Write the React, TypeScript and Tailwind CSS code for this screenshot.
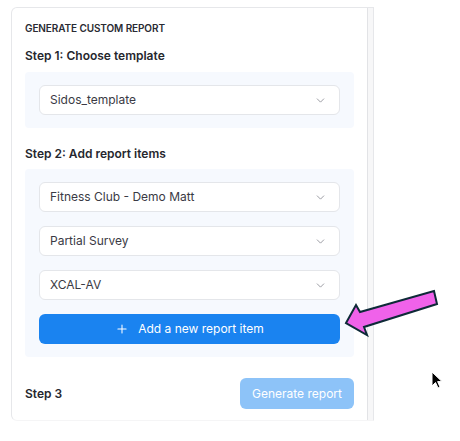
import React from 'react'
import { ChevronDown, Plus } from 'lucide-react'

const Select = ({ value }: { value: string }) => (
  <div className="h-[30px] flex items-center justify-between bg-white border border-[#e4e6ea] rounded-md pl-[10px] pr-[12px] text-[12px] text-[#3a3a44]">
    <span>{value}</span>
    <ChevronDown size={13} strokeWidth={1.6} className="text-[#8d8f97]" />
  </div>
)

const App = () => {
  return (
    <div className="relative w-[460px] h-[441px] bg-white font-['Inter',sans-serif] overflow-hidden">
      <div className="ml-[11px] mt-[7px] w-[363px] h-[414px] flex border border-[#e6e7ea] border-b-[#f5f5f6] rounded-tl-md rounded-bl-md">
        <div className="flex-1 pl-[13px] pr-[13px] pt-[14px]">
          <h2 className="text-[10px] font-semibold uppercase tracking-[-0.01em] text-[#2a2b33] leading-[12px]">Generate Custom Report</h2>

          <h3 className="mt-[14px] text-[12px] font-semibold text-[#26272e] leading-[16px]">Step 1: Choose template</h3>
          <div className="mt-[8px] bg-[#f6f9fe] rounded px-[14px] py-[13px]">
            <Select value="Sidos_template" />
          </div>

          <h3 className="mt-[18px] text-[12px] font-semibold text-[#26272e] leading-[16px]">Step 2: Add report items</h3>
          <div className="mt-[7px] bg-[#f6f9fe] rounded px-[14px] pt-[13px] pb-[13px] flex flex-col gap-[14px]">
            <Select value="Fitness Club - Demo Matt" />
            <Select value="Partial Survey" />
            <Select value="XCAL-AV" />
            <button className="h-[30px] flex items-center justify-center gap-[9px] bg-[#1a83f0] rounded-md text-white text-[12px]">
              <Plus size={14} strokeWidth={1.8} />
              <span>Add a new report item</span>
            </button>
          </div>

          <div className="mt-[21px] flex items-center justify-between">
            <h3 className="text-[12px] font-semibold text-[#26272e]">Step 3</h3>
            <button className="w-[114px] h-[31px] bg-[#8dc3f8] rounded-md text-white text-[12px]">Generate report</button>
          </div>
        </div>
        <div className="w-[6px] bg-[#f7f7f8] border-l border-[#e2e3e6]" />
      </div>

      <svg className="absolute left-0 top-0" width="460" height="441" viewBox="0 0 460 441">
        <polygon
          points="346,323 356,305 360,312 434,291 437,304 364,327 367,335"
          fill="#f062ea"
          stroke="#0e2a38"
          strokeWidth="2"
          strokeLinejoin="miter"
        />
        <path
          d="M432 372 L432 386 L435.5 382.5 L438 388 L440 387 L437.6 381.6 L442 381.6 Z"
          fill="#000"
          stroke="#fff"
          strokeWidth="1"
        />
      </svg>
    </div>
  )
}

export default App
